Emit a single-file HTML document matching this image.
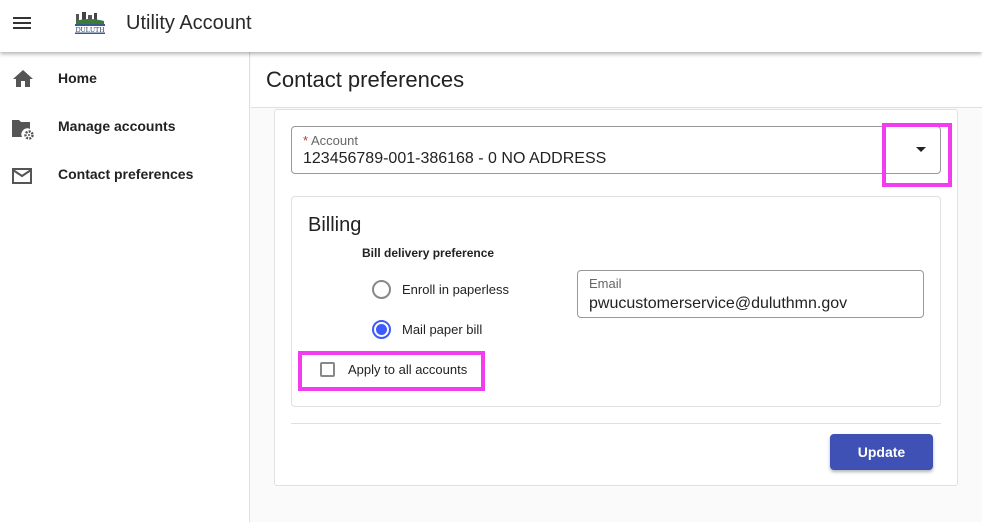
<!DOCTYPE html>
<html><head><style>
*{box-sizing:border-box;margin:0;padding:0}
body{width:982px;height:522px;overflow:hidden;font-family:"Liberation Sans",sans-serif;background:#fafafa;position:relative;color:#212121}
.hdr{position:absolute;left:0;top:0;width:982px;height:52px;background:#fff;box-shadow:0 2px 4px rgba(0,0,0,.3);z-index:2}
.side{position:absolute;left:0;top:52px;width:250px;height:470px;background:#fff;border-right:1px solid #e0e0e0}
.nav{position:absolute;left:58px;font-size:14px;font-weight:bold;color:#222}
.ab{position:absolute}
</style></head><body>
<div class="hdr">
 <div class="ab" style="left:13px;top:17px;width:18px;height:2px;background:#333;box-shadow:0 5px 0 #333,0 10px 0 #333"></div>
 <svg class="ab" style="left:74px;top:12px" width="32" height="22" viewBox="0 0 32 22">
  <rect x="2" y="2" width="3" height="7" fill="#555"/><rect x="8" y="0" width="4" height="9" fill="#444"/><rect x="14" y="3" width="4" height="6" fill="#555"/><rect x="20" y="1" width="3" height="8" fill="#444"/>
  <path d="M2 9 Q14 5 30 9 L30 12 L2 12Z" fill="#3a7a3a"/>
  <rect x="1" y="12" width="30" height="2" fill="#3b5a8a"/>
  <text x="16" y="20" font-size="7" font-family="Liberation Serif" text-anchor="middle" fill="#2b3f6b">DULUTH</text>
  <rect x="1" y="20.5" width="30" height="1.5" fill="#3b5a8a"/>
 </svg>
 <div class="ab" style="left:126px;top:12px;font-size:20px;color:#2a2a2a">Utility Account</div>
</div>
<div class="side">
 <svg class="ab" style="left:12px;top:18px" width="22" height="18" viewBox="0 0 20 18"><path d="M8 17V11h4v6h5V9h3L10 0 0 9h3v8z" fill="#555"/></svg>
 <div class="nav" style="top:18px">Home</div>
 <svg class="ab" style="left:11px;top:67px" width="24" height="22" viewBox="0 0 24 22"><path d="M1 1h7l2 2h9v7a6 6 0 0 0-8 8H1z" fill="#555"/><circle cx="18" cy="16" r="3.5" fill="none" stroke="#555" stroke-width="2.4" stroke-dasharray="2 1.2"/><circle cx="18" cy="16" r="1" fill="#555"/></svg>
 <div class="nav" style="top:66px">Manage accounts</div>
 <svg class="ab" style="left:12px;top:116px" width="20" height="16" viewBox="0 0 20 16"><rect x="1" y="1" width="18" height="14" fill="none" stroke="#555" stroke-width="2"/><path d="M1 2l9 6 9-6" fill="none" stroke="#555" stroke-width="2"/></svg>
 <div class="nav" style="top:114px">Contact preferences</div>
</div>
<div class="ab" style="left:251px;top:52px;width:731px;height:56px;background:#fff;border-bottom:1px solid #e0e0e0"></div>
<div class="ab" style="left:266px;top:67px;font-size:22px;color:#222">Contact preferences</div>
<div class="ab" style="left:274px;top:109px;width:684px;height:377px;background:#fff;border:1px solid #e0e0e0;border-radius:3px"></div>
<div class="ab" style="left:291px;top:126px;width:650px;height:48px;border:1px solid #999;border-radius:4px"></div>
<div class="ab" style="left:303px;top:133px;font-size:13px;color:#666"><span style="color:#c0392b">*</span> Account</div>
<div class="ab" style="left:303px;top:150px;font-size:16px;color:#222">123456789-001-386168 - 0 NO ADDRESS</div>
<div class="ab" style="left:916px;top:147px;width:0;height:0;border-left:5px solid transparent;border-right:5px solid transparent;border-top:5px solid #222"></div>
<div class="ab" style="left:882px;top:123px;width:70px;height:64px;border:4px solid #f23cf0"></div>
<div class="ab" style="left:291px;top:196px;width:650px;height:211px;border:1px solid #e0e0e0;border-radius:4px"></div>
<div class="ab" style="left:308px;top:214px;font-size:20px;color:#222">Billing</div>
<div class="ab" style="left:362px;top:246px;font-size:12px;font-weight:bold;color:#222">Bill delivery preference</div>
<div class="ab" style="left:372px;top:280px;width:19px;height:19px;border:2px solid #888;border-radius:50%"></div>
<div class="ab" style="left:402px;top:282px;font-size:13px;color:#222">Enroll in paperless</div>
<div class="ab" style="left:372px;top:320px;width:19px;height:19px;border:2px solid #3d5afe;border-radius:50%"><div style="margin:2px;width:11px;height:11px;border-radius:50%;background:#3d5afe"></div></div>
<div class="ab" style="left:402px;top:322px;font-size:13px;color:#222">Mail paper bill</div>
<div class="ab" style="left:298px;top:351px;width:187px;height:40px;border:4px solid #f23cf0"></div>
<div class="ab" style="left:320px;top:362px;width:15px;height:15px;border:2px solid #888;border-radius:2px"></div>
<div class="ab" style="left:348px;top:362px;font-size:13px;color:#222">Apply to all accounts</div>
<div class="ab" style="left:577px;top:270px;width:347px;height:48px;border:1px solid #999;border-radius:4px"></div>
<div class="ab" style="left:589px;top:276px;font-size:13px;color:#666">Email</div>
<div class="ab" style="left:589px;top:295px;font-size:16px;color:#222">pwucustomerservice@duluthmn.gov</div>
<div class="ab" style="left:291px;top:423px;width:650px;height:1px;background:#e0e0e0"></div>
<div class="ab" style="left:830px;top:434px;width:103px;height:36px;background:#3f51b5;border-radius:4px;box-shadow:0 2px 3px rgba(0,0,0,.3);color:#fff;font-weight:bold;font-size:14px;text-align:center;line-height:36px">Update</div>
</body></html>
